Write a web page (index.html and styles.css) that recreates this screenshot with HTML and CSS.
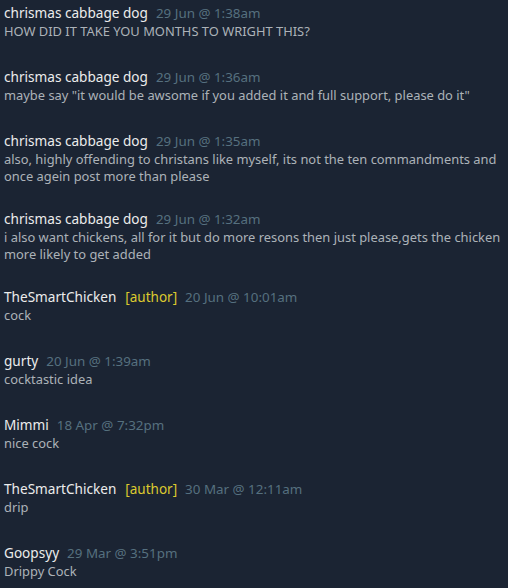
FILE: index.html
```html
<!DOCTYPE html>
<html>
<head>
<meta charset="utf-8">
<link rel="stylesheet" href="styles.css">
</head>
<body>
<div class="thread">
  <div class="comment">
    <div class="head"><span class="name">chrismas cabbage dog</span><span class="date">29 Jun @ 1:38am</span></div>
    <div class="text">HOW DID IT TAKE YOU MONTHS TO WRIGHT THIS?</div>
  </div>
  <div class="comment">
    <div class="head"><span class="name">chrismas cabbage dog</span><span class="date">29 Jun @ 1:36am</span></div>
    <div class="text">maybe say "it would be awsome if you added it and full support, please do it"</div>
  </div>
  <div class="comment">
    <div class="head"><span class="name">chrismas cabbage dog</span><span class="date">29 Jun @ 1:35am</span></div>
    <div class="text">also, highly offending to christans like myself, its not the ten commandments and once agein post more than please</div>
  </div>
  <div class="comment">
    <div class="head"><span class="name">chrismas cabbage dog</span><span class="date">29 Jun @ 1:32am</span></div>
    <div class="text">i also want chickens, all for it but do more resons then just please,gets the chicken more likely to get added</div>
  </div>
  <div class="comment">
    <div class="head"><span class="name">TheSmartChicken</span><span class="author">[author]</span><span class="date">20 Jun @ 10:01am</span></div>
    <div class="text">cock</div>
  </div>
  <div class="comment">
    <div class="head"><span class="name">gurty</span><span class="date">20 Jun @ 1:39am</span></div>
    <div class="text">cocktastic idea</div>
  </div>
  <div class="comment">
    <div class="head"><span class="name">Mimmi</span><span class="date">18 Apr @ 7:32pm</span></div>
    <div class="text">nice cock</div>
  </div>
  <div class="comment">
    <div class="head"><span class="name">TheSmartChicken</span><span class="author">[author]</span><span class="date">30 Mar @ 12:11am</span></div>
    <div class="text">drip</div>
  </div>
  <div class="comment">
    <div class="head"><span class="name">Goopsyy</span><span class="date">29 Mar @ 3:51pm</span></div>
    <div class="text">Drippy Cock</div>
  </div>
</div>
</body>
</html>
```
FILE: styles.css
```css
html, body {
  margin: 0;
  padding: 0;
  background: #1b2433;
}
body {
  font-family: "Noto Sans", "Open Sans", Arial, sans-serif;
}
.thread {
  padding: 3px 0 0 4px;
  display: flex;
  flex-direction: column;
  gap: 24px;
}
.comment {
  min-height: 40px;
  display: flex;
  flex-direction: column;
  gap: 2px;
}
.head {
  height: 18px;
  line-height: 18px;
  white-space: nowrap;
}
.name {
  font-size: 13.6px;
  color: #ececec;
}
.author {
  font-size: 13.5px;
  color: #dcc92f;
  margin-left: 9px;
}
.date {
  font-size: 13.4px;
  color: #56707f;
  margin-left: 8px;
}
.text {
  font-size: 12.9px;
  line-height: 17px;
  color: #acb2b8;
}
```
